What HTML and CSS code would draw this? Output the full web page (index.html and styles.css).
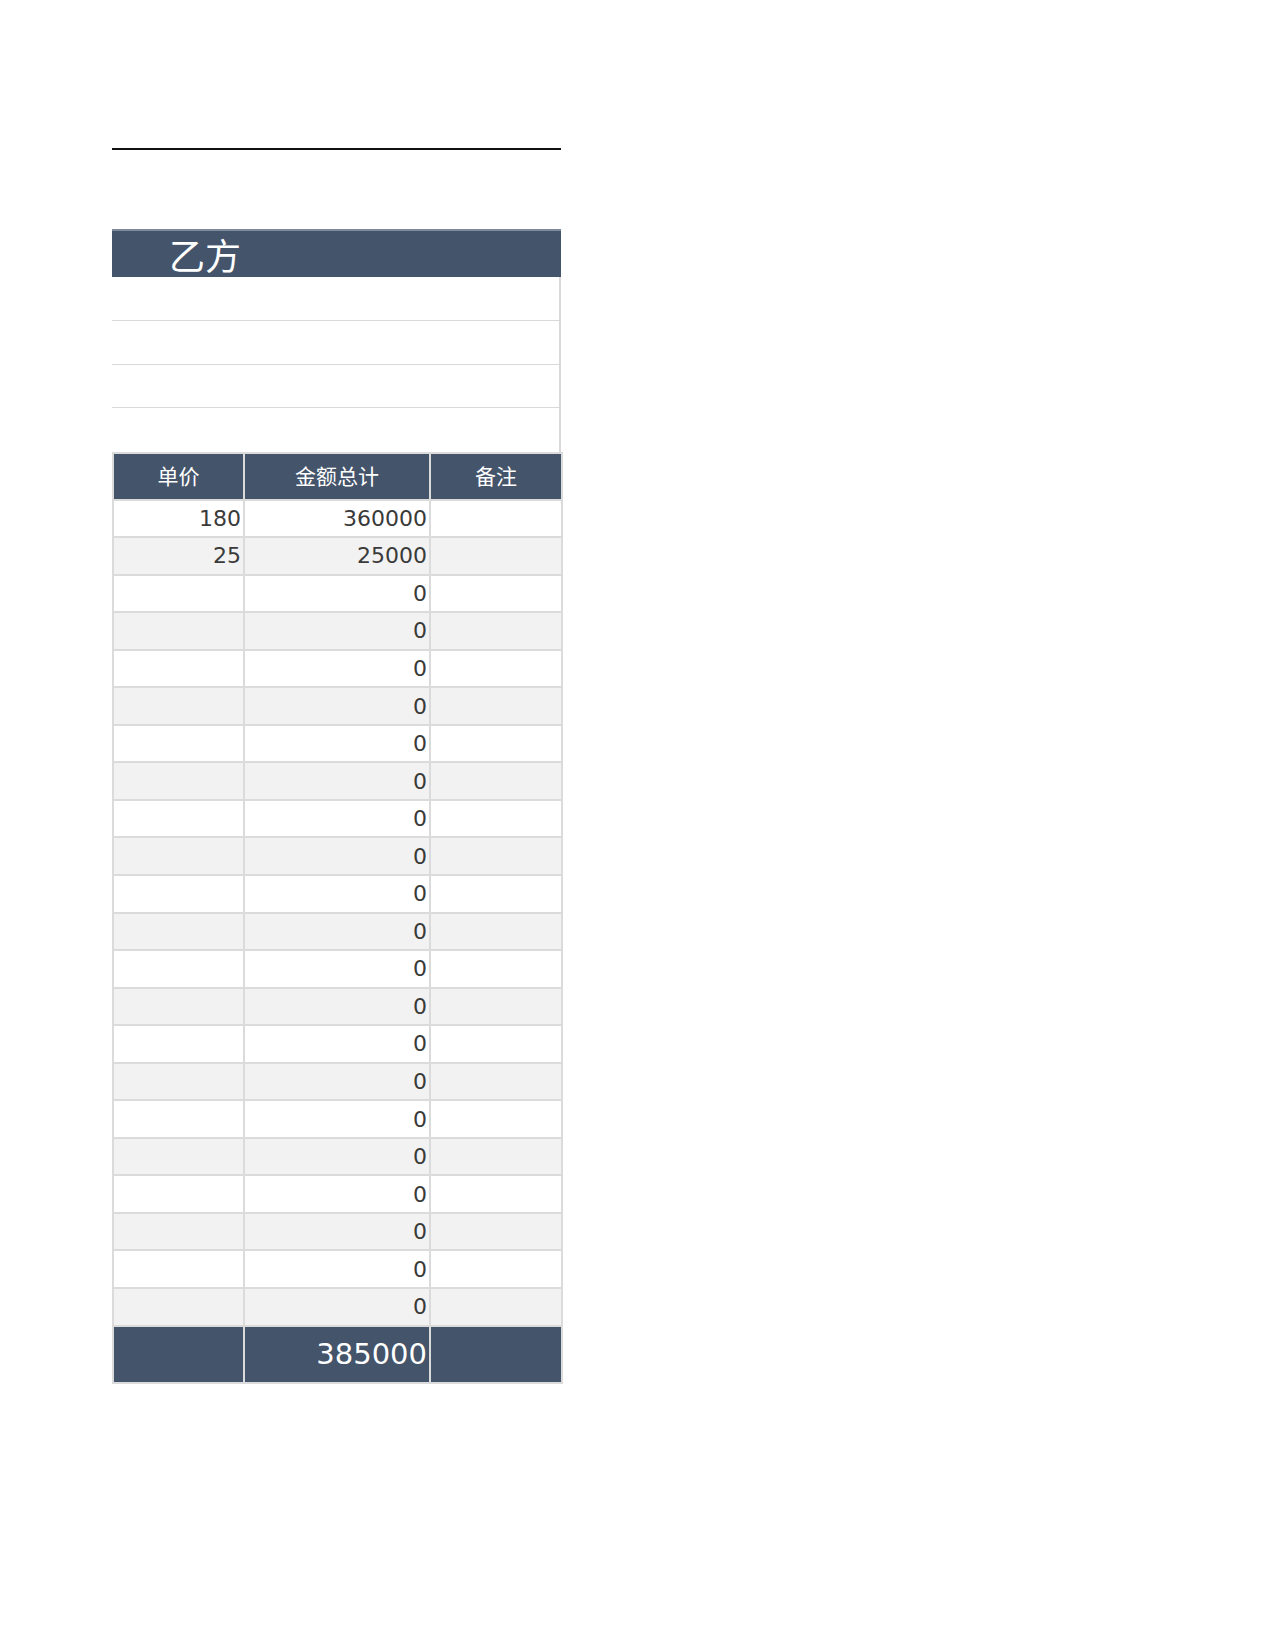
FILE: index.html
```html
<!DOCTYPE html>
<html lang="zh">
<head>
<meta charset="utf-8">
<title>乙方</title>
<link rel="stylesheet" href="styles.css">
</head>
<body>
<div class="sheet">
  <div class="topline"></div>
  <div class="party">
    <div class="party-head">乙方</div>
    <div class="party-row"></div>
    <div class="party-row"></div>
    <div class="party-row"></div>
    <div class="party-row last"></div>
  </div>
  <table class="grid">
    <colgroup><col class="c1"><col class="c2"><col class="c3"></colgroup>
    <thead>
      <tr><th>单价</th><th>金额总计</th><th>备注</th></tr>
    </thead>
    <tbody>
      <tr><td>180</td><td>360000</td><td></td></tr>
      <tr><td>25</td><td>25000</td><td></td></tr>
      <tr><td></td><td>0</td><td></td></tr>
      <tr><td></td><td>0</td><td></td></tr>
      <tr><td></td><td>0</td><td></td></tr>
      <tr><td></td><td>0</td><td></td></tr>
      <tr><td></td><td>0</td><td></td></tr>
      <tr><td></td><td>0</td><td></td></tr>
      <tr><td></td><td>0</td><td></td></tr>
      <tr><td></td><td>0</td><td></td></tr>
      <tr><td></td><td>0</td><td></td></tr>
      <tr><td></td><td>0</td><td></td></tr>
      <tr><td></td><td>0</td><td></td></tr>
      <tr><td></td><td>0</td><td></td></tr>
      <tr><td></td><td>0</td><td></td></tr>
      <tr><td></td><td>0</td><td></td></tr>
      <tr><td></td><td>0</td><td></td></tr>
      <tr><td></td><td>0</td><td></td></tr>
      <tr><td></td><td>0</td><td></td></tr>
      <tr><td></td><td>0</td><td></td></tr>
      <tr><td></td><td>0</td><td></td></tr>
      <tr><td></td><td>0</td><td></td></tr>
    </tbody>
    <tfoot>
      <tr><td></td><td>385000</td><td></td></tr>
    </tfoot>
  </table>
</div>
</body>
</html>
```
FILE: styles.css
```css
html, body {
  margin: 0;
  padding: 0;
  background: #ffffff;
}
body {
  font-family: "DejaVu Sans", "Noto Sans CJK SC", sans-serif;
  color: #3a3a3a;
}
.sheet {
  width: 449px;
  margin-left: 112px;
  padding-top: 148px;
}
.topline {
  height: 2px;
  background: #111111;
}
.party {
  margin-top: 79px;
  width: 449px;
}
.party-head {
  height: 46px;
  border-top: 2px solid #7f8a9a;
  background: #44546a;
  color: #ffffff;
  font-size: 36px;
  line-height: 54px;
  padding-left: 57px;
  box-sizing: content-box;
  overflow: hidden;
}
.party-row {
  height: 42.75px;
  border-bottom: 1px solid #d9d9d9;
  border-right: 2px solid #d9d9d9;
  box-sizing: content-box;
}
.party-row.last {
  border-bottom: none;
  height: 43.25px;
}
.grid {
  border-collapse: collapse;
  table-layout: fixed;
  width: 449px;
}
.c1 { width: 131px; }
.c2 { width: 186px; }
.c3 { width: 132px; }
.grid th, .grid td {
  border: 2px solid #dbdbdb;
  padding: 0 2px 0 0;
  overflow: hidden;
  white-space: nowrap;
}
.grid th {
  background: #44546a;
  color: #ffffff;
  font-weight: normal;
  font-size: 21px;
  height: 47px;
  text-align: center;
  padding: 0 0 2px 0;
  box-sizing: border-box;
}
.grid tbody td {
  height: 37.55px;
  font-size: 22px;
  text-align: right;
  box-sizing: border-box;
}
.grid tbody tr:nth-child(even) td {
  background: #f2f2f2;
}
.grid tfoot td {
  background: #44546a;
  color: #ffffff;
  font-size: 29px;
  height: 57px;
  text-align: right;
  box-sizing: border-box;
}
```
